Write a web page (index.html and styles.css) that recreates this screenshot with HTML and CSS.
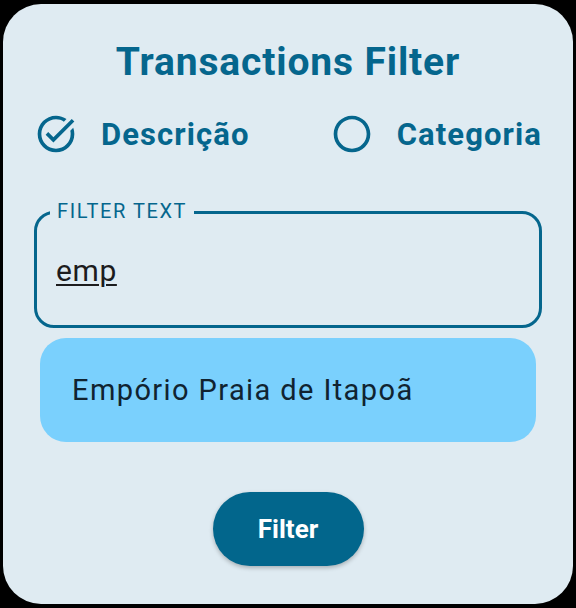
FILE: index.html
```html
<!DOCTYPE html>
<html lang="pt">
<head>
<meta charset="utf-8">
<title>Transactions Filter</title>
<link rel="stylesheet" href="styles.css">
</head>
<body>
<div class="dialog">
  <h1 class="title">Transactions Filter</h1>
  <div class="options">
    <div class="option">
      <svg class="opt-icon" viewBox="0 0 24 24"><path d="M22,5.18L10.59,16.6l-4.24-4.24l1.41-1.41l2.83,2.83l10-10L22,5.18z M19.79,10.22C19.92,10.79,20,11.390,20,12c0,4.42-3.58,8-8,8s-8-3.58-8-8c0-4.42,3.58-8,8-8c1.58,0,3.04,0.46,4.28,1.25l1.44-1.440C16.1,2.67,14.13,2,12,2C6.48,2,2,6.48,2,12c0,5.52,4.48,10,10,10s10-4.48,10-10c0-1.19-0.22-2.33-0.6-3.39L19.79,10.22z"/></svg>
      <span class="opt-label">Descrição</span>
    </div>
    <div class="option">
      <svg class="opt-icon" viewBox="0 0 24 24"><path d="M12 2C6.48 2 2 6.48 2 12s4.48 10 10 10 10-4.48 10-10S17.52 2 12 2zm0 18c-4.42 0-8-3.580-8-8s3.58-8 8-8 8 3.58 8 8-3.58 8-8 8z"/></svg>
      <span class="opt-label">Categoria</span>
    </div>
  </div>
  <div class="field">
    <span class="field-label">FILTER TEXT</span>
    <span class="field-value">emp</span>
  </div>
  <div class="suggestion">Empório Praia de Itapoã</div>
  <div class="actions">
    <button class="btn">Filter</button>
  </div>
</div>
</body>
</html>
```

FILE: styles.css
```css
html, body {
  margin: 0;
  padding: 0;
  background: #000;
  width: 576px;
  height: 608px;
  overflow: hidden;
}
body {
  font-family: Roboto, "Noto Sans", sans-serif;
  padding: 4px 3px 4px 3px;
  box-sizing: border-box;
}
.dialog {
  width: 570px;
  height: 600px;
  background: #dfebf2;
  border-radius: 38px;
  box-sizing: border-box;
  padding: 35px 31px 0 31px;
  display: flex;
  flex-direction: column;
}
.title {
  margin: 0;
  text-align: center;
  color: #05668d;
  font-size: 39px;
  font-weight: 700;
  line-height: 46px;
  letter-spacing: 0.85px;
}
.options {
  display: flex;
  justify-content: space-between;
  align-items: center;
  margin-top: 27px;
  height: 44px;
}
.option {
  display: flex;
  align-items: center;
}
.opt-icon {
  width: 44px;
  height: 44px;
  fill: #05668d;
}
.opt-label {
  color: #05668d;
  font-size: 31px;
  font-weight: 700;
  margin-left: 23px;
  letter-spacing: 1.1px;
}
.field {
  position: relative;
  margin-top: 55px;
  height: 117px;
  border: 3px solid #05668d;
  border-radius: 20px;
  box-sizing: border-box;
  display: flex;
  align-items: center;
  padding-left: 19px;
}
.field-label {
  position: absolute;
  left: 13px;
  top: -14px;
  padding: 0 7px;
  background: #dfebf2;
  color: #05668d;
  font-size: 20px;
  line-height: 22px;
  letter-spacing: 1.6px;
}
.field-value {
  font-size: 30px;
  color: #1c1c1e;
  text-decoration: underline;
  text-decoration-thickness: 2px;
  text-underline-offset: 3px;
  margin-top: 2px;
  letter-spacing: 0.6px;
}
.suggestion {
  margin: 10px 6px 0 6px;
  height: 104px;
  background: #7ad0fd;
  border-radius: 26px;
  display: flex;
  align-items: center;
  padding-left: 32px;
  font-size: 29px;
  color: #102330;
  letter-spacing: 1.4px;
}
.actions {
  display: flex;
  justify-content: center;
  margin-top: 50px;
}
.btn {
  width: 151px;
  height: 74px;
  border: none;
  border-radius: 37px;
  background: #02668c;
  color: #fff;
  font-family: Roboto, sans-serif;
  font-size: 26px;
  font-weight: 700;
  box-shadow: 0 2px 4px rgba(0,0,0,0.25);
  padding: 0;
}
```
